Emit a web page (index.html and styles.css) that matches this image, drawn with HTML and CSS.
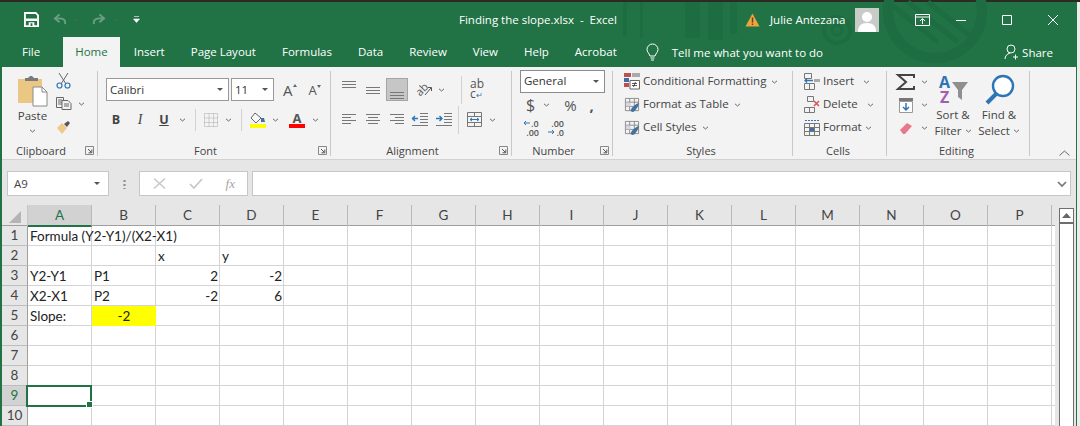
FILE: index.html
```html
<!DOCTYPE html>
<html>
<head>
    <meta charset="UTF-8">
    <title>Finding the slope.xlsx - Excel</title>
    <link rel="stylesheet" href="styles.css">
</head>
<body>
    <svg width="0" height="0" class="defs">
        <symbol id="chev" viewBox="0 0 7 4"><path d="M1 .8 3.500 3 6 .8" fill="none" stroke="#666" stroke-width="1"/></symbol>
        <symbol id="launch" viewBox="0 0 9 9"><path d="M.5.5h8v8h-8z" fill="none" stroke="#888"/><path d="M3 3l3.500 3.500M6.800 3.500v3.300H3.500" fill="none" stroke="#555"/></symbol>
        <symbol id="tbl" viewBox="0 0 17 17"><path d="M1.500 1.500h14v13h-14zM1.500 5.500h14M1.500 10h14M6 1.500v13M11 1.500v13" fill="none" stroke="#8a8a8a"/><path d="M7 15c0-3 4-7 9-9-1 5-4 9-7 10z" fill="#41719c"/><path d="M2 6h5v4H2z" fill="#d5d5e5"/></symbol>
    </svg>
    <div class="top-strip"></div>
    <div class="window">
        <!-- title bar -->
        <header class="titlebar">
            <svg class="pattern" width="458" height="65" viewBox="0 0 458 65">
                <defs>
                    <clipPath id="ring-in"><circle cx="317" cy="9" r="47"/></clipPath>
                </defs>
                <g fill="#1e6c41">
                    <path d="M5 0h4v34H5zM22 0h3v36h-3zM67 0h15v36H67zM90 0h15v38H90zM112 0h7v32h-7z"/>
                </g>
                <g fill="none" stroke="#1e6c41">
                    <circle cx="317" cy="9" r="47" stroke-width="10"/>
                    <circle cx="219" cy="28" r="13" stroke-width="4"/>
                    <circle cx="219" cy="28" r="5" stroke-width="3"/>
                    <path clip-path="url(#ring-in)" d="M270 0l50 40M290 0l50 40M310 0l45 36" stroke-width="5"/>
                </g>
            </svg>
            <div class="qat">
                <svg class="q-save" width="15" height="15" viewBox="0 0 16 16"><path d="M1 1h11.500L15 3.500V15H1z" fill="none" stroke="#fff" stroke-width="2"/><path d="M2 7h12v2.500H2zM5 11h6v4H5z" fill="#fff"/><path d="M7 12h2v3H7z" fill="#217346"/></svg>
                <svg class="q-undo" width="14" height="13" viewBox="0 0 15 14"><path d="M13 12c1-5-3-7-9-6M7 1.500 2 6l5 4" fill="none" stroke="#6d9e83" stroke-width="2"/></svg>
                <svg class="q-chev" width="7" height="4"><use href="#chev"/></svg>
                <svg class="q-redo" width="14" height="13" viewBox="0 0 15 14"><path d="M2 12C1 7 5 5 11 6M8 1.500 13 6l-5 4" fill="none" stroke="#6d9e83" stroke-width="2"/></svg>
                <svg class="q-chev q-chev2" width="7" height="4"><use href="#chev"/></svg>
                <svg class="q-more" width="7" height="7" viewBox="0 0 7 7"><path d="M1 .5h5M.5 3h6L3.500 6.500z" fill="#fff" stroke="#fff" stroke-width=".6"/></svg>
            </div>
            <div class="doc-title">Finding the slope.xlsx&nbsp; -&nbsp; Excel</div>
            <div class="account">
                <svg width="15" height="14" viewBox="0 0 15 14"><path d="M7.500.5 14.500 13.500H.5z" fill="#eda43c"/><path d="M6.800 4.500h1.400v5H6.800zM6.800 10.500h1.400V12H6.800z" fill="#6b3d10"/></svg>
                <span class="user-name">Julie Antezana</span>
                <svg class="avatar" width="24" height="24" viewBox="0 0 24 24"><path d="M0 0h24v24H0z" fill="#c9cbc9"/><circle cx="12" cy="9" r="5" fill="#fff"/><path d="M3 24c0-6 3-9 9-9s9 3 9 9z" fill="#fff"/></svg>
            </div>
            <div class="winctl">
                <svg width="15" height="12" viewBox="0 0 15 12"><path d="M.5.5h14v11H.5zM.5 3h14M7.500 10V5M5 7l2.500-2.500L10 7" fill="none" stroke="#fff"/></svg>
                <svg width="10" height="10" viewBox="0 0 10 10"><path d="M0 5.500h10" stroke="#fff"/></svg>
                <svg width="10" height="10" viewBox="0 0 10 10"><path d="M.5.5h9v9h-9z" fill="none" stroke="#fff"/></svg>
                <svg width="10" height="10" viewBox="0 0 10 10"><path d="M0 0l10 10M10 0 0 10" stroke="#fff"/></svg>
            </div>
        </header>

        <!-- tabs -->
        <nav class="tabs">
            <span class="tab tab-file">File</span>
            <span class="tab active">Home</span>
            <span class="tab">Insert</span>
            <span class="tab">Page Layout</span>
            <span class="tab">Formulas</span>
            <span class="tab">Data</span>
            <span class="tab">Review</span>
            <span class="tab">View</span>
            <span class="tab">Help</span>
            <span class="tab">Acrobat</span>
            <div class="tell">
                <svg width="13" height="17" viewBox="0 0 13 17"><path d="M4 12C3 9 1 8 1 5.500a5.500 5.500 0 0 1 11 0C12 8 10 9 9 12zM4.500 14h4M5 16h3" fill="none" stroke="#fff"/></svg>
                <span>Tell me what you want to do</span>
            </div>
            <div class="share">
                <svg width="14" height="16" viewBox="0 0 14 16"><circle cx="7" cy="5" r="4" fill="none" stroke="#fff"/><path d="M1 15c0-3 2-5 5-6M9 13h5M11.500 10.500v5" fill="none" stroke="#fff"/></svg>
                <span>Share</span>
            </div>
        </nav>

        <!-- ribbon -->
        <section class="ribbon">
            <div class="group g-clip">
                <div class="group-body clip-body">
                    <div class="paste">
                        <svg width="31" height="31" viewBox="0 0 31 31"><path d="M1 4h24v24H1z" fill="#ebc784"/><path d="M8 3h3l2-2h2l2 2h4v3H8z" fill="#7b7b7b"/><path d="M16 12h9l5 5v14H16z" fill="#fff" stroke="#8a8a8a"/><path d="M25 12v5h5" fill="none" stroke="#8a8a8a"/></svg>
                        <span>Paste</span>
                        <svg class="chev" width="7" height="4"><use href="#chev"/></svg>
                    </div>
                    <div class="clip-tools">
                        <svg width="15" height="17" viewBox="0 0 15 17"><path d="M3 1l7 11M12 1 5 12" stroke="#666" fill="none"/><circle cx="3.500" cy="13.500" r="2.500" fill="none" stroke="#2e75b6" stroke-width="1.200"/><circle cx="11.500" cy="13.500" r="2.500" fill="none" stroke="#2e75b6" stroke-width="1.200"/></svg>
                        <div class="tool-row">
                            <svg width="16" height="13" viewBox="0 0 16 13"><path d="M.5.5h7v10h-7zM2 3h4M2 5h4M2 7h4" fill="none" stroke="#666"/><path d="M6 3.500h6l3 3v6H6z" fill="#f3f3f3" stroke="#666"/><path d="M8 7h5M8 9h5" stroke="#666"/></svg>
                            <svg class="chev" width="7" height="4"><use href="#chev"/></svg>
                        </div>
                        <svg width="16" height="15" viewBox="0 0 16 15"><path d="M1 9l5-5 5 5-5 6z" fill="#edc98a"/><path d="M8 5l4-3 2 2-3 4z" fill="#555"/></svg>
                    </div>
                </div>
                <div class="group-label"><span>Clipboard</span><svg width="9" height="9"><use href="#launch"/></svg></div>
            </div>

            <div class="group g-font">
                <div class="group-body two-rows">
                    <div class="tool-row">
                        <div class="combo combo-font"><span>Calibri</span><i class="drop"></i></div>
                        <div class="combo combo-size"><span>11</span><i class="drop"></i></div>
                        <span class="grow-a big">A<i></i></span>
                        <span class="grow-a small">A<i></i></span>
                    </div>
                    <div class="tool-row font-row">
                        <b class="fmt">B</b>
                        <i class="fmt fmt-i">I</i>
                        <u class="fmt">U</u>
                        <svg class="chev c1" width="7" height="4"><use href="#chev"/></svg>
                        <span class="vsep"></span>
                        <svg width="14" height="14" viewBox="0 0 14 14"><path d="M.5.5h13v13H.5zM5 .5v13M9.500.5v13M.5 5h13M.5 9.500h13" fill="none" stroke="#aaa" stroke-dasharray="1 1"/></svg>
                        <svg class="chev c2" width="7" height="4"><use href="#chev"/></svg>
                        <span class="vsep"></span>
                        <svg width="16" height="16" viewBox="0 0 16 16"><path d="M5 1 1 6l5 5 5-5z" fill="#f7f7f7" stroke="#666"/><path d="M11 6h3l1 4h-4z" fill="#41719c"/><path d="M0 12h16v4H0z" fill="#ff0"/></svg>
                        <svg class="chev c3" width="7" height="4"><use href="#chev"/></svg>
                        <div class="font-color">A</div>
                        <svg class="chev c4" width="7" height="4"><use href="#chev"/></svg>
                    </div>
                </div>
                <div class="group-label"><span>Font</span><svg width="9" height="9"><use href="#launch"/></svg></div>
            </div>

            <div class="group g-align">
                <div class="group-body two-rows">
                    <div class="tool-row">
                        <svg width="14" height="23" viewBox="0 0 14 23"><path d="M0 3.500h14M0 6.500h14M0 9.500h14" stroke="#777"/></svg>
                        <svg width="14" height="23" viewBox="0 0 14 23"><path d="M0 9.500h14M0 12.500h14M0 15.500h14" stroke="#777"/></svg>
                        <div class="align-on"><svg width="14" height="21" viewBox="0 0 14 21"><path d="M0 13.500h14M0 16.500h14M0 19.500h14" stroke="#777"/></svg></div>
                        <svg class="orient-icon" width="18" height="18" viewBox="0 0 18 18"><text x="1" y="14" class="orient" transform="rotate(-45 5 10)">ab</text><path d="M10 14l6-7M13 6.500h3.500V10" fill="none" stroke="#555"/></svg>
                        <svg class="chev" width="7" height="4"><use href="#chev"/></svg>
                        <span class="vsep tall"></span>
                        <div class="wrap-ab">ab<span>c<em>&#8629;</em></span></div>
                    </div>
                    <div class="tool-row align-row">
                        <svg width="14" height="11" viewBox="0 0 14 11"><path d="M0 .5h14M0 3.500h9M0 6.500h14M0 9.500h9" stroke="#777"/></svg>
                        <svg width="14" height="11" viewBox="0 0 14 11"><path d="M0 .5h14M2 3.500h10M0 6.500h14M2 9.500h10" stroke="#777"/></svg>
                        <svg width="14" height="11" viewBox="0 0 14 11"><path d="M0 .5h14M5 3.500h9M0 6.500h14M5 9.500h9" stroke="#777"/></svg>
                        <svg width="16" height="13" viewBox="0 0 16 13"><path d="M8 .5h8M8 3.500h8M8 6.500h8M8 9.500h8M0 12.500h16" stroke="#777"/><path d="M0 5.500h6M3 3 .5 5.500 3 8" fill="none" stroke="#2e75b6" stroke-width="1.400"/></svg>
                        <svg width="16" height="13" viewBox="0 0 16 13"><path d="M8 .5h8M8 3.500h8M8 6.500h8M8 9.500h8M0 12.500h16" stroke="#777"/><path d="M0 5.500h6M3.500 3 6 5.500 3.500 8" fill="none" stroke="#2e75b6" stroke-width="1.400"/></svg>
                        <span class="vsep tall"></span>
                        <svg width="15" height="15" viewBox="0 0 15 15"><path d="M.5.5h14v14H.5zM.5 4.500h14M.5 10.500h14M7.500.5v4M7.500 10.500v4" fill="none" stroke="#777"/><path d="M3 7.500h9M5 6 3 7.500 5 9M10 6l2 1.500L10 9" fill="none" stroke="#2e75b6"/></svg>
                        <svg class="chev" width="7" height="4"><use href="#chev"/></svg>
                    </div>
                </div>
                <div class="group-label"><span>Alignment</span><svg width="9" height="9"><use href="#launch"/></svg></div>
            </div>

            <div class="group g-num">
                <div class="group-body three-rows">
                    <div class="combo combo-num"><span>General</span><i class="drop"></i></div>
                    <div class="tool-row num-row">
                        <span class="cur">$</span>
                        <svg class="chev" width="7" height="4"><use href="#chev"/></svg>
                        <span class="pct">%</span>
                        <span class="comma">,</span>
                    </div>
                    <div class="tool-row dec-row">
                        <div class="dec"><span>.0</span><span>.00</span><svg width="7" height="6" viewBox="0 0 7 6"><path d="M7 3H1M3 1 1 3l2 2" fill="none" stroke="#2e75b6"/></svg></div>
                        <div class="dec dec-r"><span>.00</span><span>.0</span><svg width="7" height="6" viewBox="0 0 7 6"><path d="M0 3h6M4 1l2 2-2 2" fill="none" stroke="#2e75b6"/></svg></div>
                    </div>
                </div>
                <div class="group-label"><span>Number</span><svg width="9" height="9"><use href="#launch"/></svg></div>
            </div>

            <div class="group g-styles">
                <div class="group-body three-rows">
                    <div class="cmd">
                        <svg width="16" height="17" viewBox="0 0 16 17"><path d="M0 0h7v4H0z" fill="#c0504d"/><path d="M0 5h5v4H0z" fill="#3e6da8"/><path d="M0 10h5v4H0z" fill="#c0504d"/><path d="M8 0h8v4H8z" fill="#aaa"/><path d="M6 7.500h9.500v8.500H6z" fill="#fff" stroke="#666"/><path d="M8 10.500h5M8 12.500h5M11.500 9l-2 5" stroke="#333" fill="none" stroke-width=".8"/></svg>
                        <span>Conditional Formatting</span><svg class="chev" width="7" height="4"><use href="#chev"/></svg>
                    </div>
                    <div class="cmd">
                        <svg width="16" height="16"><use href="#tbl"/></svg>
                        <span>Format as Table</span><svg class="chev" width="7" height="4"><use href="#chev"/></svg>
                    </div>
                    <div class="cmd">
                        <svg width="16" height="16"><use href="#tbl"/></svg>
                        <span>Cell Styles</span><svg class="chev" width="7" height="4"><use href="#chev"/></svg>
                    </div>
                </div>
                <div class="group-label"><span>Styles</span></div>
            </div>

            <div class="group g-cells">
                <div class="group-body three-rows">
                    <div class="cmd">
                        <svg width="16" height="17" viewBox="0 0 16 17"><path d="M.5.5h7v5h-7zM.5 10.500h10v6H.5zM5.500 10.500v6" fill="none" stroke="#777"/><path d="M10 6h6v3h-6z" fill="#aaa"/><path d="M1 7.500h8M3 5.500 1 7.500l2 2" fill="none" stroke="#2e75b6" stroke-width="1.300"/></svg>
                        <span class="c-insert">Insert</span><svg class="chev" width="7" height="4"><use href="#chev"/></svg>
                    </div>
                    <div class="cmd">
                        <svg width="16" height="17" viewBox="0 0 16 17"><path d="M3.500.5h6v5h-6zM.5 11.500h10v5H.5zM5.500 11.500v5" fill="none" stroke="#777"/><path d="M10 5l5 5M15 5l-5 5" stroke="#d9534f" stroke-width="1.500"/></svg>
                        <span class="c-delete">Delete</span><svg class="chev" width="7" height="4"><use href="#chev"/></svg>
                    </div>
                    <div class="cmd">
                        <svg width="16" height="17" viewBox="0 0 16 17"><path d="M.5 4.500h15v12H.5zM.5 8.500h15M.5 12.500h15M5.500 4.500v12M10.500 4.500v12" fill="none" stroke="#777"/><path d="M6 9h4v3H6z" fill="#3e6da8"/><path d="M1 1.500h14" stroke="#2e75b6" stroke-dasharray="2 1"/></svg>
                        <span class="c-format">Format</span><svg class="chev" width="7" height="4"><use href="#chev"/></svg>
                    </div>
                </div>
                <div class="group-label"><span>Cells</span></div>
            </div>

            <div class="group g-edit">
                <div class="group-body edit-body">
                    <div class="edit-small">
                        <div class="tool-row">
                            <svg width="18" height="16" viewBox="0 0 18 16"><path d="M17 4V1H1l8 7-8 7h16v-3" fill="none" stroke="#444" stroke-width="2"/></svg>
                            <svg class="chev" width="7" height="4"><use href="#chev"/></svg>
                        </div>
                        <div class="tool-row">
                            <svg class="in" width="16" height="16" viewBox="0 0 16 16"><path d="M1 1h14v3H1z" fill="#777"/><path d="M1.500 4.500h13v11h-13z" fill="#fff" stroke="#999"/><path d="M8 6v7M5 10l3 3 3-3" fill="none" stroke="#2e75b6" stroke-width="1.500"/></svg>
                            <svg class="chev" width="7" height="4"><use href="#chev"/></svg>
                        </div>
                        <div class="tool-row">
                            <svg class="in" width="16" height="14" viewBox="0 0 16 14"><path d="M2 9l7-7 5 3-7 8H5z" fill="#e8798a"/></svg>
                            <svg class="chev" width="7" height="4"><use href="#chev"/></svg>
                        </div>
                    </div>
                    <div class="big-cmd">
                        <svg width="31" height="31" viewBox="0 0 31 31">
                            <text x="1" y="14" class="az a">A</text><text x="2" y="29" class="az z">Z</text>
                            <path d="M14 8h16l-6 8v10l-4-3v-7z" fill="#8f8f8f"/>
                        </svg>
                        <span>Sort &amp;</span>
                        <span>Filter <svg class="chev" width="7" height="4"><use href="#chev"/></svg></span>
                    </div>
                    <div class="big-cmd">
                        <svg width="31" height="31" viewBox="0 0 31 31"><circle cx="19" cy="12" r="10" fill="#fff" stroke="#2e75b6" stroke-width="2.400"/><path d="M12 20 3 29" stroke="#2e75b6" stroke-width="4"/></svg>
                        <span>Find &amp;</span>
                        <span>Select <svg class="chev" width="7" height="4"><use href="#chev"/></svg></span>
                    </div>
                </div>
                <div class="group-label"><span>Editing</span></div>
            </div>

            <div class="collapse">
                <svg width="11" height="6" viewBox="0 0 11 6"><path d="M.5 5.500 5.500 1l5 4.500" fill="none" stroke="#666"/></svg>
            </div>
        </section>

        <!-- formula bar -->
        <section class="formula-bar">
            <div class="name-box"><span>A9</span><i class="drop"></i></div>
            <div class="fb-dots"></div>
            <div class="fx-box">
                <svg width="13" height="11" viewBox="0 0 13 11"><path d="M1 .5l11 10M12 .5l-11 10" stroke="#c6c6c6" stroke-width="1.500"/></svg>
                <svg width="14" height="11" viewBox="0 0 14 11"><path d="M1 6l4 4 8-9" fill="none" stroke="#c6c6c6" stroke-width="1.700"/></svg>
                <em>fx</em>
            </div>
            <div class="formula-input">
                <svg width="10" height="6" viewBox="0 0 10 6"><path d="M1 1l4 4 4-4" fill="none" stroke="#777" stroke-width="1.700"/></svg>
            </div>
        </section>

        <!-- sheet -->
        <section class="sheet">
            <div class="grid">
                <div class="col-heads">
                    <div class="corner"><svg width="12" height="12" viewBox="0 0 12 12"><path d="M12 0v12H0z" fill="#b4b4b4"/></svg></div>
                    <div class="col-head on">A</div><div class="col-head">B</div><div class="col-head">C</div><div class="col-head">D</div>
                    <div class="col-head">E</div><div class="col-head">F</div><div class="col-head">G</div><div class="col-head">H</div>
                    <div class="col-head">I</div><div class="col-head">J</div><div class="col-head">K</div><div class="col-head">L</div>
                    <div class="col-head">M</div><div class="col-head">N</div><div class="col-head">O</div><div class="col-head">P</div>
                </div>
                <div class="row"><div class="row-head">1</div><div class="cell">Formula (Y2-Y1)/(X2-X1)</div></div>
                <div class="row"><div class="row-head">2</div><div class="cell"></div><div class="cell"></div><div class="cell">x</div><div class="cell">y</div></div>
                <div class="row"><div class="row-head">3</div><div class="cell">Y2-Y1</div><div class="cell">P1</div><div class="cell num">2</div><div class="cell num">-2</div></div>
                <div class="row"><div class="row-head">4</div><div class="cell">X2-X1</div><div class="cell">P2</div><div class="cell num">-2</div><div class="cell num">6</div></div>
                <div class="row"><div class="row-head">5</div><div class="cell">Slope:</div><div class="cell slope">-2</div></div>
                <div class="row"><div class="row-head">6</div></div>
                <div class="row"><div class="row-head">7</div></div>
                <div class="row"><div class="row-head">8</div></div>
                <div class="row"><div class="row-head on">9</div><div class="cell selected"></div></div>
                <div class="row"><div class="row-head">10</div></div>
            </div>
            <div class="scrollbar">
                <div class="scroll-up"><svg width="9" height="5" viewBox="0 0 9 5"><path d="M4.500 0 9 5H0z" fill="#666"/></svg></div>
                <div class="scroll-track"></div>
            </div>
        </section>
    </div>
</body>
</html>
```

FILE: styles.css
```css
* {
    box-sizing: border-box;
}

body {
    margin: 0;
    width: 1080px;
    height: 426px;
    overflow: hidden;
    background-color: #ececec;
    font-family: "Open Sans", "Noto Sans", sans-serif;
    font-size: 11.5px;
    color: #444;
}

.defs {
    position: absolute;
}

svg {
    display: block;
    flex: none;
    overflow: visible;
}

.top-strip {
    height: 2px;
    background-color: #2b2a24;
}

.window {
    width: 1077px;
    border-left: 2px solid #217346;
    border-right: 1px solid #217346;
}

/* title bar */
.titlebar {
    position: relative;
    display: flex;
    align-items: center;
    height: 35px;
    background-color: #217346;
    color: #fff;
}

.pattern {
    position: absolute;
    left: 616px;
    top: 0;
}

.qat, .doc-title, .account, .winctl {
    position: relative;
    display: flex;
    align-items: center;
}

.qat {
    width: 457px;
    padding-left: 22px;
}

.q-undo { margin-left: 14px; }
.q-redo { margin-left: 12px; }
.q-more { margin-left: 13px; }
.q-chev { margin-left: 6px; opacity: .5; }
.q-chev2 { margin-left: 7px; }

.doc-title {
    width: 286px;
    white-space: nowrap;
}

.account {
    gap: 10px;
    width: 135px;
}

.user-name {
    width: 75px;
    white-space: nowrap;
}

.winctl {
    margin-left: 35px;
}

.winctl svg:nth-child(2) { margin-left: 26px; }
.winctl svg:nth-child(3) { margin-left: 36px; }
.winctl svg:nth-child(4) { margin-left: 36px; }

/* tabs */
.tabs {
    display: flex;
    align-items: center;
    height: 30px;
    padding: 0 23px 0 7px;
    background-color: #217346;
    color: #fff;
}

.tab {
    padding: 0 13px;
    line-height: 30px;
    white-space: nowrap;
}

.tab-file {
    margin-right: 10px;
}

.tab.active {
    padding: 0 12px;
    margin-right: 1px;
    background-color: #f3f3f3;
    color: #217346;
}

.tell {
    display: flex;
    align-items: center;
    gap: 13px;
    margin-left: 16px;
    white-space: nowrap;
}

.share {
    display: flex;
    align-items: center;
    gap: 4px;
    margin-left: auto;
}

/* ribbon */
.ribbon {
    display: flex;
    height: 93px;
    background-color: #f3f3f3;
    border-bottom: 1px solid #d2d2d2;
}

.group {
    display: flex;
    flex-direction: column;
    height: 92px;
    padding-top: 3px;
    position: relative;
}

.group::after {
    content: "";
    position: absolute;
    right: 0;
    top: 4px;
    bottom: 3px;
    width: 1px;
    background-color: #c8c8c8;
}

.g-clip { width: 96px; }
.g-font { width: 233px; }
.g-align { width: 181px; }
.g-num { width: 101px; }
.g-styles { width: 180px; }
.g-cells { width: 94px; }
.g-edit { width: 143px; }

.group-body {
    height: 71px;
}

.group-label {
    display: flex;
    align-items: center;
    height: 18px;
    padding-right: 4px;
    font-size: 11px;
}

.group-label span {
    flex: 1;
    text-align: center;
}

.group-label svg {
    margin-left: 5px;
}

.tool-row {
    display: flex;
    align-items: center;
}

.chev {
    display: inline-block;
    flex: none;
}

.vsep {
    width: 1px;
    height: 22px;
    background-color: #d2d2d2;
}

/* clipboard */
.clip-body {
    display: flex;
    padding-left: 15px;
}

.paste {
    display: flex;
    flex-direction: column;
    align-items: center;
    width: 31px;
    padding-top: 5px;
}

.paste span {
    margin-top: 1px;
    line-height: 17px;
}

.paste .chev {
    margin-top: 5px;
}

.clip-tools {
    display: flex;
    flex-direction: column;
    margin-left: 8px;
    padding-top: 2px;
    gap: 8px;
}

.clip-tools .tool-row .chev {
    margin-left: 6px;
}

.clip-tools > svg:last-child {
    margin-top: 1px;
}

/* font */
.two-rows {
    display: flex;
    flex-direction: column;
    gap: 7px;
    padding-top: 8px;
}

.g-font .two-rows {
    padding-left: 8px;
}

.two-rows .tool-row {
    height: 23px;
}

.combo {
    display: flex;
    align-items: center;
    justify-content: space-between;
    height: 23px;
    padding: 0 5px 0 3px;
    background-color: #fff;
    border: 1px solid #999;
    color: #333;
}

.combo-font { width: 123px; }
.combo-size { width: 43px; margin-left: 2px; }

.drop {
    width: 0;
    height: 0;
    border-left: 3px solid transparent;
    border-right: 3px solid transparent;
    border-top: 3px solid #555;
}

.grow-a {
    display: inline-flex;
    color: #555;
}

.grow-a.big { font-size: 15px; margin-left: 9px; }
.grow-a.small { font-size: 13px; margin-left: 12px; }

.grow-a i {
    width: 0;
    height: 0;
    margin-top: 4px;
    border-left: 2.5px solid transparent;
    border-right: 2.5px solid transparent;
}

.grow-a.big i { border-bottom: 3px solid #666; }
.grow-a.small i { border-top: 3px solid #666; }

.fmt {
    width: 20px;
    margin-right: 4px;
    text-align: center;
    font-family: "Liberation Serif", serif;
    font-size: 14px;
    color: #444;
}

b.fmt, u.fmt {
    font-family: "Open Sans", sans-serif;
    font-size: 12.5px;
    font-weight: 700;
}

.font-row .c1 { margin: 0 9px 0 1px; }
.font-row .c2 { margin: 0 9px 0 7px; }
.font-row .c3 { margin: 0 0 0 6px; }
.font-row .c4 { margin: 0 0 0 7px; }
.font-row .vsep { margin-right: 8px; }

.font-color {
    width: 16px;
    height: 16px;
    line-height: 12px;
    margin-left: 10px;
    text-align: center;
    font-weight: 700;
    font-size: 13px;
    color: #555;
    border-bottom: 4px solid #f00;
}

/* alignment */
.g-align .two-rows {
    padding-left: 11px;
}

.g-align .tool-row:first-child svg:nth-child(2) {
    margin-left: 10px;
}

.align-on {
    display: flex;
    justify-content: center;
    width: 22px;
    height: 23px;
    margin-left: 6px;
    background-color: #c6c6c6;
    border: 1px solid #a5a5a5;
}

.orient-icon {
    margin-left: 7px;
}

.orient {
    font-size: 11px;
    fill: #555;
}

.g-align .chev {
    margin-left: 5px;
}

.tall {
    height: 28px;
    margin-left: 16px;
}

.wrap-ab {
    margin-left: 8px;
    font-size: 12px;
    line-height: 10px;
    color: #555;
}

.wrap-ab span {
    display: block;
}

.wrap-ab em {
    font-style: normal;
    font-size: 8px;
    color: #2e75b6;
}

.align-row svg:nth-child(2), .align-row svg:nth-child(3) {
    margin-left: 10px;
}

.align-row svg:nth-child(4), .align-row svg:nth-child(5) {
    margin-left: 8px;
}

.align-row .tall {
    margin-left: 6px;
    margin-right: 8px;
}

.align-row .chev {
    margin-left: 7px;
}

/* number */
.three-rows {
    display: grid;
    grid-template-rows: repeat(3, 23px);
}

.g-num .three-rows {
    padding-left: 8px;
}

.combo-num {
    width: 85px;
    border-color: #8c8c8c;
}

.combo-num span {
    margin-top: -2px;
}

.cur {
    margin-left: 6px;
    font-size: 16px;
    color: #555;
}

.num-row .chev { margin-left: 8px; }

.pct {
    margin-left: 14px;
    font-size: 15px;
    color: #555;
}

.comma {
    margin-left: 13px;
    font-size: 15px;
    font-weight: 700;
    line-height: 12px;
    color: #555;
}

.dec-row {
    gap: 9px;
    padding-left: 3px;
}

.dec {
    display: grid;
    grid-template-columns: 8px 8px;
    width: 16px;
    font-size: 9px;
    line-height: 9px;
    font-weight: 600;
    color: #555;
}

.dec span:nth-child(1) { grid-column: 2; grid-row: 1; }
.dec span:nth-child(2) { grid-column: 1 / 3; grid-row: 2; text-align: right; }
.dec svg { grid-column: 1; grid-row: 1; align-self: center; }

.dec-r span:nth-child(1) { grid-column: 1 / 3; grid-row: 1; text-align: right; }
.dec-r span:nth-child(2) { grid-column: 2; grid-row: 2; }
.dec-r svg { grid-column: 1; grid-row: 2; }

/* styles and cells */
.cmd {
    display: flex;
    align-items: center;
    gap: 3px;
    white-space: nowrap;
}

.cmd span {
    margin-top: -2px;
}

.g-styles .three-rows,
.g-cells .three-rows {
    padding-left: 11px;
}

.g-styles .chev { margin-left: 2px; }

.c-insert { width: 37px; }
.c-delete { width: 41px; }
.c-format { width: 39px; }

/* editing */
.edit-body {
    display: flex;
    padding-left: 10px;
}

.edit-small {
    display: grid;
    grid-template-rows: repeat(3, 23px);
    width: 33px;
}

.edit-small .chev { margin-left: 6px; }
.edit-small .in { margin-left: 1px; margin-right: 1px; }

.big-cmd {
    display: flex;
    flex-direction: column;
    align-items: center;
    width: 46px;
    padding-top: 4px;
    line-height: 16px;
    white-space: nowrap;
}

.big-cmd svg:first-child {
    margin-bottom: 2px;
}

.big-cmd .chev {
    display: inline-block;
    vertical-align: middle;
}

.az {
    font-size: 16px;
    font-weight: 700;
}

.az.a { fill: #2e75b6; }
.az.z { fill: #a05fb0; }

.collapse {
    display: flex;
    align-items: flex-end;
    padding: 0 0 3px 29px;
}

/* formula bar */
.formula-bar {
    display: flex;
    align-items: flex-start;
    height: 45px;
    padding: 11px 5px 0;
    background-color: #e6e6e6;
}

.name-box {
    display: flex;
    align-items: center;
    justify-content: space-between;
    width: 102px;
    height: 25px;
    padding: 0 8px 0 6px;
    background-color: #fff;
    border: 1px solid #c6c6c6;
}

.fb-dots {
    width: 30px;
    height: 10px;
    margin-top: 8px;
    background: radial-gradient(circle, #8f8f8f 1px, transparent 1.3px) center top / 3px 4px repeat-y;
}

.fx-box {
    display: flex;
    align-items: center;
    justify-content: space-between;
    width: 109px;
    height: 25px;
    padding: 0 12px 0 13px;
    background-color: #fff;
    border: 1px solid #c6c6c6;
}

.fx-box em {
    font-family: "Liberation Serif", serif;
    font-size: 13px;
    color: #a5a5a5;
}

.formula-input {
    display: flex;
    align-items: center;
    justify-content: flex-end;
    flex: 1;
    height: 25px;
    margin-left: 4px;
    padding-right: 3px;
    background-color: #fff;
    border: 1px solid #c6c6c6;
}

/* sheet */
.sheet {
    display: flex;
    height: 221px;
    background-color: #e6e6e6;
}

.grid {
    width: 1053px;
    font-family: Lato, "Liberation Sans", sans-serif;
    font-size: 13.5px;
    color: #222;
}

.col-heads {
    display: grid;
    grid-template-columns: 26px repeat(16, 64px) 3px;
    height: 21px;
    border-bottom: 1px solid #9f9f9f;
    background-color: #e6e6e6;
}

.corner {
    display: flex;
    align-items: flex-end;
    justify-content: center;
    padding-bottom: 3px;
    border-right: 1px solid #c6c6c6;
}

.col-head {
    line-height: 20px;
    text-align: center;
    color: #444;
    border-right: 1px solid #b9b9b9;
}

.col-head.on {
    margin-bottom: -1px;
    background-color: #d2d2d2;
    color: #217346;
    border-bottom: 2px solid #217346;
}

.row {
    display: grid;
    grid-template-columns: 26px repeat(16, 64px) 3px;
    grid-auto-rows: 19px;
    height: 20px;
    border-bottom: 1px solid #d4d4d4;
    background: #fff repeating-linear-gradient(to right, transparent 0, transparent 63px, #d4d4d4 63px, #d4d4d4 64px) 26px 0 / 1024px 100% no-repeat;
}

.row-head {
    line-height: 19px;
    text-align: center;
    color: #444;
    background-color: #e6e6e6;
    border-right: 1px solid #9f9f9f;
    margin-bottom: -1px;
    border-bottom: 1px solid #bdbdbd;
}

.row-head.on {
    background-color: #d2d2d2;
    color: #217346;
}

.cell {
    padding: 0 2px;
    line-height: 20px;
    white-space: nowrap;
}

.num {
    text-align: right;
}

.slope {
    margin-bottom: -1px;
    text-align: center;
    background-color: #ff0;
}

.selected {
    position: relative;
    margin: -1px 0 -1px -2px;
    border: 2px solid #217346;
    width: 66px;
    height: 22px;
}

.selected::after {
    content: "";
    position: absolute;
    right: -3px;
    bottom: -3px;
    width: 5px;
    height: 5px;
    background-color: #217346;
    border: 1px solid #fff;
}

.scrollbar {
    display: flex;
    flex-direction: column;
    width: 15px;
    height: 221px;
    margin: 3px 0 0 4px;
    border: 1px solid #6e6e6e;
    background-color: #fff;
}

.scroll-up {
    display: flex;
    align-items: center;
    justify-content: center;
    height: 15px;
    border-bottom: 2px solid #6e6e6e;
}

.scroll-track {
    flex: 1;
}
```
